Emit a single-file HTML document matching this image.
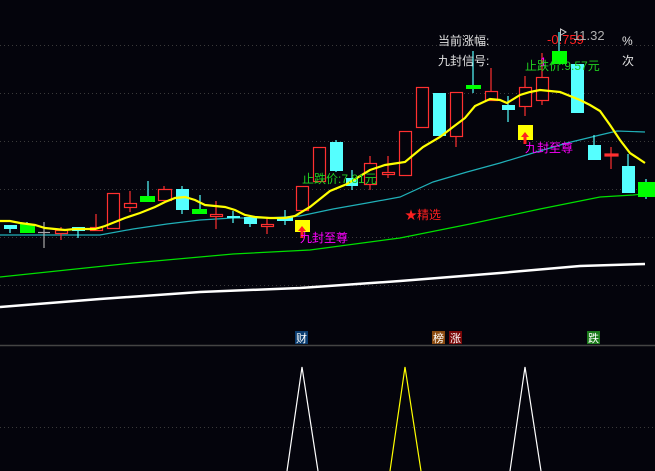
<!DOCTYPE html>
<html><head><meta charset="utf-8"><style>
html,body{margin:0;padding:0;background:#04040c;width:655px;height:471px;overflow:hidden}
svg{display:block}
text{font-family:"Liberation Sans","Noto Sans CJK SC",sans-serif}
</style></head><body>
<svg width="655" height="471" viewBox="0 0 655 471" xmlns="http://www.w3.org/2000/svg">
<rect width="655" height="471" fill="#04040c"/>
<g stroke="#3a3a3a" stroke-width="1" stroke-dasharray="1,3">
<line x1="0" y1="45.5" x2="655" y2="45.5"/>
<line x1="0" y1="93.5" x2="655" y2="93.5"/>
<line x1="0" y1="141.5" x2="655" y2="141.5"/>
<line x1="0" y1="189.5" x2="655" y2="189.5"/>
<line x1="0" y1="237.5" x2="655" y2="237.5"/>
<line x1="0" y1="285.5" x2="655" y2="285.5"/>
<line x1="0" y1="427.5" x2="655" y2="427.5"/>
</g>
<line x1="0" y1="345.5" x2="655" y2="345.5" stroke="#444" stroke-width="1.5"/>
<!-- long MAs -->
<polyline fill="none" stroke="#ffffff" stroke-width="2.5" points="0,307 100,299 200,292 300,288 400,281 500,273 580,266 645,264"/>
<polyline fill="none" stroke="#00e000" stroke-width="1.2" points="0,277 133,263 233,254 310,250 400,238 470,224 540,209 600,197 633,195 655,193"/>
<polyline fill="none" stroke="#20b0b8" stroke-width="1.2" points="0,235 100,235 133,229 167,224 200,220 233,218 267,218 300,216 333,209 367,203 400,197 433,182 467,172 500,163 533,153 567,143 600,135 617,131 645,132"/>
<!-- candles -->
<g stroke-width="1.2">
<!-- wicks -->
<g stroke="#ff3030">
<line x1="61" y1="227" x2="61" y2="240"/><line x1="96" y1="214" x2="96" y2="230"/>
<line x1="130" y1="191" x2="130" y2="212"/><line x1="164" y1="186" x2="164" y2="200"/>
<line x1="216" y1="201" x2="216" y2="229"/><line x1="267" y1="218" x2="267" y2="234"/>
<line x1="388" y1="156" x2="388" y2="178"/><line x1="370" y1="156" x2="370" y2="190"/>
<line x1="456" y1="136" x2="456" y2="147"/><line x1="491" y1="68" x2="491" y2="100"/>
<line x1="525" y1="76" x2="525" y2="116"/><line x1="542" y1="53" x2="542" y2="105"/>
<line x1="611" y1="147" x2="611" y2="169"/>
</g>
<g stroke="#5ff">
<line x1="10" y1="225" x2="10" y2="233"/><line x1="78" y1="227" x2="78" y2="238"/>
<line x1="148" y1="181" x2="148" y2="200"/><line x1="182" y1="186" x2="182" y2="214"/>
<line x1="200" y1="195" x2="200" y2="210"/><line x1="233" y1="211" x2="233" y2="223"/>
<line x1="250" y1="217" x2="250" y2="227"/><line x1="285" y1="210" x2="285" y2="225"/>
<line x1="336" y1="140" x2="336" y2="172"/><line x1="352" y1="170" x2="352" y2="190"/>
<line x1="473" y1="51" x2="473" y2="93"/><line x1="508" y1="96" x2="508" y2="122"/>
<line x1="559" y1="32" x2="559" y2="64"/><line x1="594" y1="135" x2="594" y2="145"/>
<line x1="628" y1="154" x2="628" y2="170"/><line x1="646" y1="179" x2="646" y2="199"/>
<line x1="27" y1="222" x2="27" y2="226"/>
</g>
<line x1="44" y1="222" x2="44" y2="248" stroke="#aaa"/><line x1="38" y1="232.5" x2="50" y2="232.5" stroke="#aaa"/>
<!-- red hollow bodies -->
<g fill="#04040c" stroke="#ff3030">
<rect x="55.5" y="230.5" width="12" height="3"/><rect x="90.5" y="227.5" width="12" height="3"/>
<rect x="107.5" y="193.5" width="12" height="35"/><rect x="124.5" y="203.5" width="12" height="4"/>
<rect x="158.5" y="189.5" width="13" height="11"/><rect x="210.5" y="214.5" width="12" height="2"/>
<rect x="261.5" y="224.5" width="12" height="2"/><rect x="296.5" y="186.5" width="12" height="24"/>
<rect x="313.5" y="147.5" width="12" height="34"/><rect x="364.5" y="163.5" width="12" height="21"/>
<rect x="382.5" y="172.5" width="12" height="2"/><rect x="399.5" y="131.5" width="12" height="44"/>
<rect x="416.5" y="87.5" width="12" height="40"/><rect x="450.5" y="92.5" width="12" height="44"/>
<rect x="485.5" y="91.5" width="12" height="9"/><rect x="519.5" y="87.5" width="12" height="19"/>
<rect x="536.5" y="77.5" width="12" height="23"/><rect x="605" y="154" width="13" height="2" fill="#ff3030"/>
</g>
<!-- cyan bodies -->
<g fill="#55ffff" stroke="none">
<rect x="4" y="225" width="13" height="4"/><rect x="72" y="227" width="13" height="4"/>
<rect x="176" y="189" width="13" height="21"/><rect x="227" y="216" width="13" height="2"/>
<rect x="244" y="217" width="13" height="7"/><rect x="330" y="142" width="13" height="29"/>
<rect x="346" y="178" width="12" height="8"/><rect x="433" y="93" width="13" height="43"/>
<rect x="502" y="105" width="13" height="5"/><rect x="571" y="64" width="13" height="49"/>
<rect x="588" y="145" width="13" height="15"/><rect x="622" y="166" width="13" height="27"/>
<rect x="277" y="217" width="16" height="4"/>
</g>
<!-- green bodies -->
<g fill="#00ff00">
<rect x="20" y="224" width="15" height="9"/><rect x="140" y="196" width="15" height="6"/>
<rect x="192" y="209" width="15" height="5"/><rect x="466" y="85" width="15" height="4"/>
<rect x="552" y="51" width="15" height="13"/><rect x="638" y="182" width="17" height="15"/>
</g>
</g>
<!-- MA5 yellow -->
<polyline fill="none" stroke="#ffff00" stroke-width="2.2" points="0,221 10,221 20,223 35,225 45,228 55,229 65,230 75,229 95,229 105,226 115,222 125,218 140,213 155,207 165,202 175,198 185,197 195,200 205,205 215,206 225,207 235,210 245,215 255,217 270,218 285,218 295,216 310,207 330,191 347,184 370,170 385,165 405,162 423,147 440,137 453,127 465,118 475,106 490,99 500,100 507,103 520,95 530,92 540,90 560,92 580,100 590,105 600,111 610,125 620,140 630,153 645,163"/>
<!-- signals -->
<rect x="295" y="220" width="15" height="12" fill="#ffff00"/>
<path d="M302 226 L306 231 L303.5 231 L303.5 238 L300.5 238 L300.5 231 L298 231 Z" fill="#ff2020"/>
<text x="300" y="242" font-size="12" fill="#ff00ff">九封至尊</text>
<rect x="518" y="125" width="15" height="15" fill="#ffff00"/>
<path d="M525 132 L529 137 L526.5 137 L526.5 144 L523.5 144 L523.5 137 L521 137 Z" fill="#ff2020"/>
<text x="525" y="152" font-size="12" fill="#ff00ff">九封至尊</text>
<text x="302" y="183" font-size="12" fill="#20d020">止跌价:7.81元</text>
<text x="405" y="219" font-size="12" fill="#ff2020">★精选</text>
<!-- header -->
<text x="438" y="45" font-size="12" fill="#e0e0e0">当前涨幅:</text>
<text x="438" y="65" font-size="12" fill="#e0e0e0">九封信号:</text>
<text x="547" y="44" font-size="13" fill="#ff2020">-0.759</text>
<path d="M560.5 41 L560.5 29 L566 32 L561 35" fill="none" stroke="#ccc" stroke-width="1"/>
<text x="573" y="40" font-size="13" fill="#b0b0b0">11.32</text>
<text x="622" y="45" font-size="12" fill="#e0e0e0">%</text>
<text x="622" y="65" font-size="12" fill="#e0e0e0">次</text>
<text x="540" y="66" font-size="12" fill="#ff00ff">1</text>
<text x="525" y="70" font-size="12" fill="#20d020">止跌价:9.57元</text>
<!-- badges -->
<rect x="295" y="331" width="13" height="13" fill="#0a3c70"/><text x="296" y="342" font-size="11" fill="#fff">财</text>
<rect x="432" y="331" width="13" height="13" fill="#8a4a10"/><text x="433" y="342" font-size="11" fill="#fff">榜</text>
<rect x="449" y="331" width="13" height="13" fill="#7a0808"/><text x="450" y="342" font-size="11" fill="#fff">涨</text>
<rect x="587" y="331" width="13" height="13" fill="#1a7a1a"/><text x="588" y="342" font-size="11" fill="#fff">跌</text>
<!-- bottom triangles -->
<polyline fill="none" stroke="#ffffff" stroke-width="1.2" points="287,471 302,367 318,471"/>
<polyline fill="none" stroke="#ffff00" stroke-width="1.2" points="390,471 405,367 421,471"/>
<polyline fill="none" stroke="#ffffff" stroke-width="1.2" points="510,471 525,367 541,471"/>
</svg>
</body></html>
